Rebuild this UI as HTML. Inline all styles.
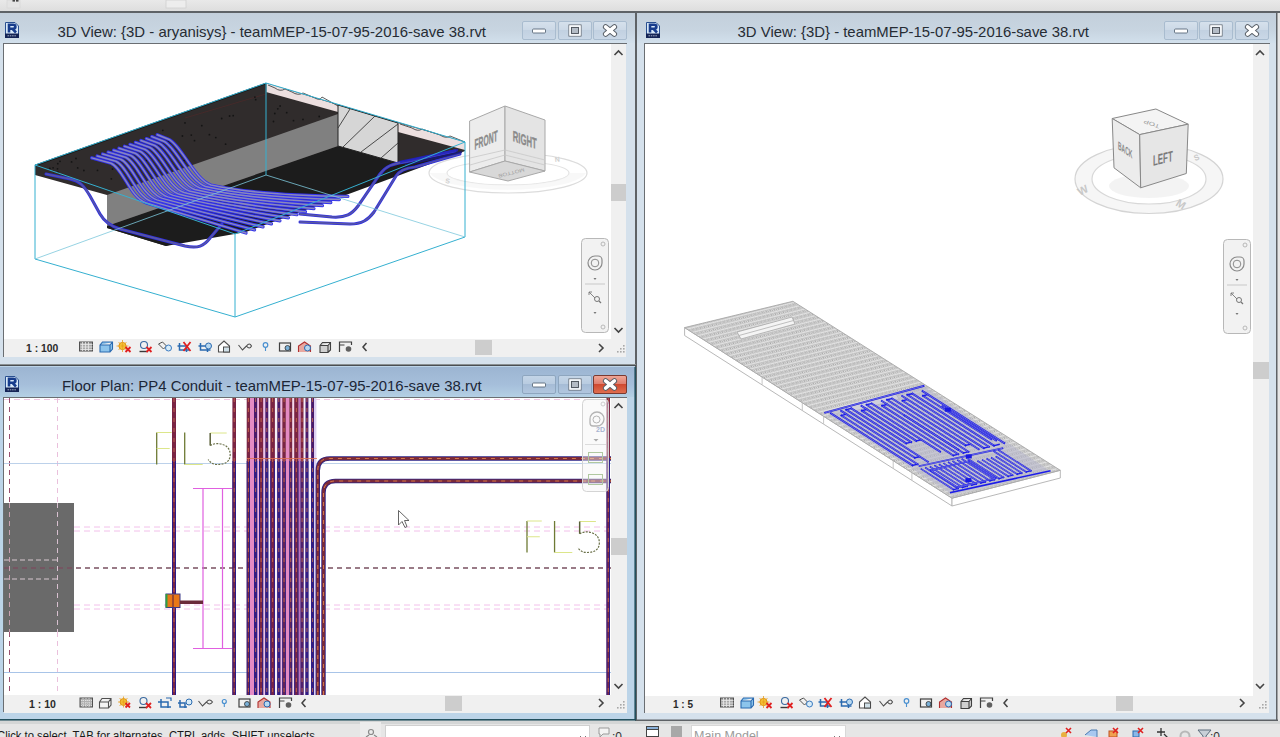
<!DOCTYPE html>
<html><head><meta charset="utf-8">
<style>
html,body{margin:0;padding:0;width:1280px;height:737px;overflow:hidden;background:#e6e6e6;}
svg{position:absolute;left:0;top:0;}
text{font-family:"Liberation Sans",sans-serif;}
</style></head>
<body>
<svg width="1280" height="737" viewBox="0 0 1280 737">
<defs>
  <linearGradient id="tb" x1="0" y1="0" x2="0" y2="1">
    <stop offset="0" stop-color="#c3cfdb"/><stop offset="0.6" stop-color="#c8d5e1"/><stop offset="1" stop-color="#d2e0ec"/>
  </linearGradient>
  <linearGradient id="tba" x1="0" y1="0" x2="0" y2="1">
    <stop offset="0" stop-color="#9cb5d2"/><stop offset="0.6" stop-color="#a6bfdb"/><stop offset="1" stop-color="#b4d0e4"/>
  </linearGradient>
  <linearGradient id="top" x1="0" y1="0" x2="0" y2="1">
    <stop offset="0" stop-color="#e9e9e9"/><stop offset="1" stop-color="#dedede"/>
  </linearGradient>
  <clipPath id="c1"><rect x="4" y="44" width="607" height="295"/></clipPath>
  <clipPath id="c2"><rect x="4" y="398" width="607" height="297"/></clipPath>
  <clipPath id="c3"><rect x="645" y="44" width="608" height="652"/></clipPath>
  <linearGradient id="btn" x1="0" y1="0" x2="0" y2="1"><stop offset="0" stop-color="#d6e1ec"/><stop offset="0.5" stop-color="#cbd8e6"/><stop offset="0.5" stop-color="#c2d1e1"/><stop offset="1" stop-color="#cad8e7"/></linearGradient>
  <linearGradient id="btna" x1="0" y1="0" x2="0" y2="1"><stop offset="0" stop-color="#c4d5e7"/><stop offset="0.5" stop-color="#b8cbe0"/><stop offset="0.5" stop-color="#a6bcd6"/><stop offset="1" stop-color="#b2c7df"/></linearGradient>
  <linearGradient id="closeg" x1="0" y1="0" x2="0" y2="1"><stop offset="0" stop-color="#f0a898"/><stop offset="0.45" stop-color="#e08070"/><stop offset="0.5" stop-color="#d04a30"/><stop offset="1" stop-color="#e07050"/></linearGradient>
  <pattern id="slabpat" patternUnits="userSpaceOnUse" width="4" height="4.5" patternTransform="rotate(-14)">
    <rect width="4" height="4.5" fill="#cdcdcd"/>
    <path d="M-0.5,3.6 L1.5,0.6 M1.5,3.6 L3.5,0.6 M3.5,3.6 L5.5,0.6" fill="none" stroke="#969696" stroke-width="0.75"/>
    <path d="M0.6,3.8 L2.6,0.8 M2.6,3.8 L4.6,0.8" fill="none" stroke="#ececec" stroke-width="0.7"/>
    <rect y="4" width="4" height="0.5" fill="#f2f2f2"/>
  </pattern>
  <pattern id="bluepat" patternUnits="userSpaceOnUse" width="12" height="5" patternTransform="rotate(32.5)">
    <rect width="12" height="5" fill="#c4c4d8"/>
    <rect y="0" width="12" height="1.6" fill="#1e1ee8"/>
    <rect y="2.8" width="12" height="0.8" fill="#6a6ad8"/>
    <rect x="10" y="0" width="1.3" height="5" fill="#3030e0"/>
  </pattern>
</defs>
<!-- top strip -->
<rect x="0" y="0" width="1280" height="11" fill="url(#top)"/>
<rect x="0" y="11" width="1280" height="2" fill="#5e6266"/><rect x="0" y="13" width="1280" height="1" fill="#dde5ec"/>
<rect x="166" y="0" width="20" height="8" fill="#ededed" stroke="#cfcfcf" stroke-width="0.8"/>
<rect x="7" y="0" width="13" height="8" fill="#e4e4e4" stroke="#d4d4d4" stroke-width="0.6"/><rect x="12.5" y="0" width="2.5" height="1.6" fill="#444"/><rect x="16" y="0" width="2.5" height="1.6" fill="#444"/>

<!-- WINDOW 1 upper-left -->
<rect x="0" y="13" width="635" height="351" fill="#d5e1ec"/>
<rect x="0" y="13" width="635" height="30" fill="url(#tb)"/>
<rect x="3" y="43" width="624" height="1" fill="#6a6e72"/>
<rect x="3" y="43" width="1" height="314" fill="#6a6e72"/>
<rect x="4" y="44" width="622" height="313" fill="#f0f0f0"/>
<rect x="4" y="44" width="607" height="295" fill="#ffffff"/>


<!-- VIEW 1 drawing -->
<g clip-path="url(#c1)">
  <!-- view cube ring -->
  <ellipse cx="508" cy="173" rx="79" ry="20" fill="none" stroke="#dcdcdc" stroke-width="1.2"/>
  <ellipse cx="508" cy="173" rx="61" ry="12" fill="none" stroke="#e2e2e2" stroke-width="1.2"/>
  <path d="M430,173 A79,20 0 0 0 586,173 L569,173 A61,12 0 0 1 447,173 Z" fill="#f4f4f4" opacity="0.6"/>
  <!-- cube -->
  <polygon points="469.6,121 505,106 505,161 469.6,172" fill="#ececec" stroke="#a8a8a8" stroke-width="1"/>
  <polygon points="505,106 545,120 545,171 505,161" fill="#e4e4e4" stroke="#a8a8a8" stroke-width="1"/>
  <polygon points="469.6,172 505,161 545,171 508,181" fill="#d8d8d8" stroke="#a8a8a8" stroke-width="1"/>
  <g stroke="#c8c8c8" stroke-width="0.8"><line x1="470" y1="158" x2="505" y2="150"/><line x1="505" y1="150" x2="545" y2="160"/><line x1="470" y1="165" x2="505" y2="155"/><line x1="505" y1="155" x2="545" y2="165"/></g>
  <text x="0" y="0" font-size="7" fill="#a0a0a0" transform="translate(524,168) rotate(-14) scale(0.9,0.7) rotate(180)">MOTTOB</text>
  <text x="0" y="0" font-size="7" font-weight="bold" fill="#d0d0d0" transform="translate(445,183) rotate(8)">S</text>
  <text x="0" y="0" font-size="7" font-weight="bold" fill="#d0d0d0" transform="translate(555,162) rotate(-6)">N</text>
  <text x="0" y="0" font-size="12" fill="#8a8a8a" font-weight="bold" stroke="#8a8a8a" stroke-width="0.3" transform="translate(474.5,150) skewY(-22) scale(0.56,1.25)">FRONT</text>
  <text x="0" y="0" font-size="12" fill="#8a8a8a" font-weight="bold" stroke="#8a8a8a" stroke-width="0.3" transform="translate(512.8,141) skewY(19) scale(0.64,1.25)">RIGHT</text>

  <!-- slab -->
  <polygon points="35,165 266,83 465,142 465,151 166,246 107,228 107,195 35,175" fill="#302c2c"/>
  <line x1="35" y1="165.5" x2="266" y2="83.5" stroke="#151515" stroke-width="1.5"/><line x1="185" y1="118" x2="266" y2="94" stroke="#4a2a2a" stroke-width="0.8"/>
  <!-- underside darker -->
  <polygon points="107,226 338,146 398,163 465,151 300,212 246,232 166,246 107,228" fill="#1c1c1c"/>
  <!-- gray beam face -->
  <polygon points="107,195 338,114 338,146 107,226" fill="#808080"/>
  <!-- pink cut strips -->
  <polygon points="266,83 338,105 338,112 266,92" fill="#ecdfdf"/>
  <polygon points="398,123 465,142 465,150 398,132" fill="#ecdfdf"/>
  <path d="M268,85 L275,88 Q280,92 285,89 L292,92 Q298,96 303,93 L315,98 Q320,101 322,97 L338,106" fill="none" stroke="#333" stroke-width="0.8"/>
  <path d="M400,124 L412,128 Q418,132 422,129 L440,135 Q446,139 450,136 L465,142" fill="none" stroke="#333" stroke-width="0.8"/>
  <!-- hatched section -->
  <polygon points="338,105 398,123 398,163 338,146" fill="#d6d6d6" stroke="#222" stroke-width="1"/>
  <g stroke="#3a3a3a" stroke-width="0.9">
    <line x1="338" y1="128" x2="350" y2="109"/>
    <line x1="343" y1="147" x2="375" y2="116"/>
    <line x1="361" y1="152" x2="398" y2="124"/>
    <line x1="381" y1="158" x2="398" y2="143"/>
  </g>
  <line x1="266" y1="83" x2="266" y2="92" stroke="#222"/>
  <!-- dots on slab top -->
<g fill="#141414">
<circle cx="114.6" cy="150.8" r="0.9"/>
<circle cx="185.0" cy="122.9" r="0.9"/>
<circle cx="160.2" cy="143.5" r="0.9"/>
<circle cx="57.5" cy="168.8" r="0.9"/>
<circle cx="53.1" cy="167.8" r="0.9"/>
<circle cx="60.0" cy="161.3" r="0.9"/>
<circle cx="136.3" cy="170.5" r="0.9"/>
<circle cx="71.6" cy="161.9" r="0.9"/>
<circle cx="179.9" cy="160.2" r="0.9"/>
<circle cx="169.1" cy="141.6" r="0.9"/>
<circle cx="254.9" cy="97.1" r="0.9"/>
<circle cx="229.6" cy="116.0" r="0.9"/>
<circle cx="76.0" cy="158.5" r="0.9"/>
<circle cx="111.3" cy="178.8" r="0.9"/>
<circle cx="83.9" cy="170.5" r="0.9"/>
<circle cx="182.4" cy="136.0" r="0.9"/>
<circle cx="162.8" cy="130.3" r="0.9"/>
<circle cx="57.8" cy="163.7" r="0.9"/>
<circle cx="191.3" cy="135.1" r="0.9"/>
<circle cx="112.5" cy="169.1" r="0.9"/>
<circle cx="142.4" cy="147.1" r="0.9"/>
<circle cx="215.8" cy="137.6" r="0.9"/>
<circle cx="97.5" cy="170.4" r="0.9"/>
<circle cx="157.9" cy="164.9" r="0.9"/>
<circle cx="201.8" cy="125.7" r="0.9"/>
<circle cx="255.7" cy="99.7" r="0.9"/>
<circle cx="134.9" cy="168.2" r="0.9"/>
<circle cx="77.7" cy="167.9" r="0.9"/>
<circle cx="53.4" cy="171.3" r="0.9"/>
<circle cx="209.4" cy="134.7" r="0.9"/>
<circle cx="233.2" cy="115.7" r="0.9"/>
<circle cx="194.5" cy="140.7" r="0.9"/>
<circle cx="169.7" cy="143.8" r="0.9"/>
<circle cx="225.6" cy="144.2" r="0.9"/>
<circle cx="146.9" cy="160.2" r="0.9"/>
<circle cx="58.0" cy="172.1" r="0.9"/>
<circle cx="184.1" cy="160.6" r="0.9"/>
<circle cx="221.7" cy="118.5" r="0.9"/>
<circle cx="127.9" cy="167.0" r="0.9"/>
<circle cx="49.9" cy="168.4" r="0.9"/>
<circle cx="280.1" cy="106.0" r="0.9"/>
<circle cx="273.5" cy="121.5" r="0.9"/>
<circle cx="277.8" cy="108.8" r="0.9"/>
<circle cx="293.5" cy="120.7" r="0.9"/>
<circle cx="274.8" cy="113.5" r="0.9"/>
<circle cx="303.0" cy="119.4" r="0.9"/>
<circle cx="319.2" cy="116.5" r="0.9"/>
<circle cx="286.7" cy="112.7" r="0.9"/>
</g>

  <!-- pipes -->
<path d="M300,214 L332,217 C346,218 352,214 358,206 L380,174 C386,166 392,164 405,162 L455,151" fill="none" stroke="#3030e0" stroke-width="3" stroke-linecap="round"/>
<path d="M300,214 L332,217 C346,218 352,214 358,206 L380,174 C386,166 392,164 405,162 L455,151" fill="none" stroke="#5a58a0" stroke-width="1.3" stroke-linecap="round"/>
<path d="M300,222 L350,224 C362,224 368,220 374,212 L396,176 C400,170 406,168 415,167 L460,154" fill="none" stroke="#3030e0" stroke-width="3" stroke-linecap="round"/>
<path d="M300,222 L350,224 C362,224 368,220 374,212 L396,176 C400,170 406,168 415,167 L460,154" fill="none" stroke="#5a58a0" stroke-width="1.3" stroke-linecap="round"/>
<path d="M46,174 L70,179 C80,181 84,186 90,196 L100,214 C104,221 110,226 120,229 L185,246 C198,249 204,246 210,238 L222,224" fill="none" stroke="#3030e0" stroke-width="3" stroke-linecap="round"/>
<path d="M46,174 L70,179 C80,181 84,186 90,196 L100,214 C104,221 110,226 120,229 L185,246 C198,249 204,246 210,238 L222,224" fill="none" stroke="#5a58a0" stroke-width="1.3" stroke-linecap="round"/>
<path d="M91.7,157.9 L111.0,163.2 C123.0,168.2 130.2,197.9 146.2,202.9 Q181.1,213.4 246.0,233.0" fill="none" stroke="#3232ee" stroke-width="3.3" stroke-linecap="round"/>
<path d="M97.2,156.0 L115.8,161.2 C127.8,166.2 135.6,196.4 151.6,201.4 Q187.6,212.0 254.5,229.9" fill="none" stroke="#3232ee" stroke-width="3.3" stroke-linecap="round"/>
<path d="M102.6,154.0 L120.6,159.2 C132.6,164.2 141.0,194.9 157.0,199.9 Q194.1,210.5 263.0,226.9" fill="none" stroke="#3232ee" stroke-width="3.3" stroke-linecap="round"/>
<path d="M108.1,152.1 L125.4,157.2 C137.4,162.2 146.4,193.4 162.4,198.4 Q200.6,209.1 271.4,223.8" fill="none" stroke="#3232ee" stroke-width="3.3" stroke-linecap="round"/>
<path d="M113.6,150.2 L130.2,155.2 C142.2,160.2 151.8,191.9 167.8,196.9 Q207.0,207.7 279.9,220.8" fill="none" stroke="#3232ee" stroke-width="3.3" stroke-linecap="round"/>
<path d="M119.0,148.2 L135.0,153.2 C147.0,158.2 157.2,190.4 173.2,195.4 Q213.5,206.2 288.4,217.8" fill="none" stroke="#3232ee" stroke-width="3.3" stroke-linecap="round"/>
<path d="M124.5,146.3 L139.8,151.2 C151.8,156.2 162.6,189.0 178.6,194.0 Q220.0,204.7 296.9,214.7" fill="none" stroke="#3232ee" stroke-width="3.3" stroke-linecap="round"/>
<path d="M130.0,144.4 L144.5,149.2 C156.5,154.2 168.0,187.5 184.0,192.5 Q226.5,203.2 305.4,211.7" fill="none" stroke="#3232ee" stroke-width="3.3" stroke-linecap="round"/>
<path d="M135.4,142.4 L149.3,147.2 C161.3,152.2 173.4,186.0 189.4,191.0 Q233.0,201.7 313.9,208.6" fill="none" stroke="#3232ee" stroke-width="3.3" stroke-linecap="round"/>
<path d="M140.9,140.5 L154.1,145.2 C166.1,150.2 178.8,184.5 194.8,189.5 Q239.4,200.2 322.4,205.6" fill="none" stroke="#3232ee" stroke-width="3.3" stroke-linecap="round"/>
<path d="M146.4,138.6 L158.9,143.2 C170.9,148.2 184.2,183.0 200.2,188.0 Q245.9,198.7 330.8,202.5" fill="none" stroke="#3232ee" stroke-width="3.3" stroke-linecap="round"/>
<path d="M151.8,136.6 L163.7,141.2 C175.7,146.2 189.6,181.5 205.6,186.5 Q252.4,197.1 339.3,199.5" fill="none" stroke="#3232ee" stroke-width="3.3" stroke-linecap="round"/>
<path d="M157.3,134.7 L168.5,139.2 C180.5,144.2 195.0,180.0 211.0,185.0 Q258.9,195.5 347.8,196.4" fill="none" stroke="#3232ee" stroke-width="3.3" stroke-linecap="round"/>
<path d="M91.7,157.9 L111.0,163.2 C123.0,168.2 130.2,197.9 146.2,202.9 Q181.1,213.4 246.0,233.0" fill="none" stroke="#8a88bc" stroke-width="1.5" stroke-linecap="round"/>
<path d="M97.2,156.0 L115.8,161.2 C127.8,166.2 135.6,196.4 151.6,201.4 Q187.6,212.0 254.5,229.9" fill="none" stroke="#8a88bc" stroke-width="1.5" stroke-linecap="round"/>
<path d="M102.6,154.0 L120.6,159.2 C132.6,164.2 141.0,194.9 157.0,199.9 Q194.1,210.5 263.0,226.9" fill="none" stroke="#8a88bc" stroke-width="1.5" stroke-linecap="round"/>
<path d="M108.1,152.1 L125.4,157.2 C137.4,162.2 146.4,193.4 162.4,198.4 Q200.6,209.1 271.4,223.8" fill="none" stroke="#8a88bc" stroke-width="1.5" stroke-linecap="round"/>
<path d="M113.6,150.2 L130.2,155.2 C142.2,160.2 151.8,191.9 167.8,196.9 Q207.0,207.7 279.9,220.8" fill="none" stroke="#8a88bc" stroke-width="1.5" stroke-linecap="round"/>
<path d="M119.0,148.2 L135.0,153.2 C147.0,158.2 157.2,190.4 173.2,195.4 Q213.5,206.2 288.4,217.8" fill="none" stroke="#8a88bc" stroke-width="1.5" stroke-linecap="round"/>
<path d="M124.5,146.3 L139.8,151.2 C151.8,156.2 162.6,189.0 178.6,194.0 Q220.0,204.7 296.9,214.7" fill="none" stroke="#8a88bc" stroke-width="1.5" stroke-linecap="round"/>
<path d="M130.0,144.4 L144.5,149.2 C156.5,154.2 168.0,187.5 184.0,192.5 Q226.5,203.2 305.4,211.7" fill="none" stroke="#8a88bc" stroke-width="1.5" stroke-linecap="round"/>
<path d="M135.4,142.4 L149.3,147.2 C161.3,152.2 173.4,186.0 189.4,191.0 Q233.0,201.7 313.9,208.6" fill="none" stroke="#8a88bc" stroke-width="1.5" stroke-linecap="round"/>
<path d="M140.9,140.5 L154.1,145.2 C166.1,150.2 178.8,184.5 194.8,189.5 Q239.4,200.2 322.4,205.6" fill="none" stroke="#8a88bc" stroke-width="1.5" stroke-linecap="round"/>
<path d="M146.4,138.6 L158.9,143.2 C170.9,148.2 184.2,183.0 200.2,188.0 Q245.9,198.7 330.8,202.5" fill="none" stroke="#8a88bc" stroke-width="1.5" stroke-linecap="round"/>
<path d="M151.8,136.6 L163.7,141.2 C175.7,146.2 189.6,181.5 205.6,186.5 Q252.4,197.1 339.3,199.5" fill="none" stroke="#8a88bc" stroke-width="1.5" stroke-linecap="round"/>
<path d="M157.3,134.7 L168.5,139.2 C180.5,144.2 195.0,180.0 211.0,185.0 Q258.9,195.5 347.8,196.4" fill="none" stroke="#8a88bc" stroke-width="1.5" stroke-linecap="round"/>
<path d="M400,162 L458,150" fill="none" stroke="#2020c0" stroke-width="2.5" opacity="0.85"/>
<path d="M405,165 L462,152" fill="none" stroke="#1a1a80" stroke-width="2" opacity="0.8"/>
  <!-- bounding box cyan -->
  <g stroke="#35b0d0" stroke-width="1" fill="none">
    <polyline points="35,259 35,165 266,83 465,142 465,237"/>
    <polyline points="35,165 235,234 465,142"/>
    <polyline points="35,259 235,317 465,237"/>
    <line x1="235" y1="234" x2="235" y2="317"/>
    <line x1="266" y1="83" x2="266" y2="175"/>
    <polyline points="35,259 266,175 465,237" stroke="#7cc8dc" stroke-width="0.8"/>
  </g>
</g>

<!-- vertical dark divider -->
<rect x="635" y="11" width="2" height="710" fill="#5e6266"/>
<rect x="0" y="364" width="636" height="1" fill="#8a9092"/><rect x="0" y="365" width="636" height="1.6" fill="#4a4e52"/><rect x="0" y="366.6" width="635" height="1" fill="#dfe8f0"/>

<!-- WINDOW 2 bottom-left (active) -->
<rect x="0" y="366" width="635" height="354" fill="#bcd4e8"/>
<rect x="0" y="367" width="635" height="30" fill="url(#tba)"/>
<rect x="3" y="397" width="624" height="1" fill="#6a6e72"/>
<rect x="3" y="397" width="1" height="315" fill="#6a6e72"/>
<rect x="4" y="398" width="622" height="314" fill="#f0f0f0"/>
<rect x="4" y="398" width="607" height="297" fill="#ffffff"/>

<!-- VIEW 2 floor plan -->
<g clip-path="url(#c2)">
<line x1="4" y1="399.5" x2="611" y2="399.5" stroke="#f0c8e4" stroke-width="1" stroke-dasharray="6,4"/>
<line x1="9.5" y1="398" x2="9.5" y2="695" stroke="#9a5070" stroke-width="1" stroke-dasharray="5,4"/>
<line x1="57.5" y1="398" x2="57.5" y2="695" stroke="#eac0dc" stroke-width="1" stroke-dasharray="5,4"/>
<line x1="4" y1="463.5" x2="611" y2="463.5" stroke="#b4cce8" stroke-width="0.9"/>
<line x1="4" y1="672.5" x2="611" y2="672.5" stroke="#a8c4e8" stroke-width="1"/>
<rect x="4" y="503" width="70" height="129" fill="#6a6a6a"/>
<line x1="9.5" y1="503" x2="9.5" y2="632" stroke="#c8a0b0" stroke-width="1" stroke-dasharray="5,4"/>
<line x1="57.5" y1="503" x2="57.5" y2="632" stroke="#d8c0d0" stroke-width="1" stroke-dasharray="5,4"/>
<line x1="4" y1="560" x2="57" y2="560" stroke="#d8c8d0" stroke-width="1" stroke-dasharray="5,3"/>
<line x1="4" y1="579" x2="57" y2="579" stroke="#d8c8d0" stroke-width="1" stroke-dasharray="5,3"/>
<line x1="74" y1="527" x2="611" y2="527" stroke="#f2c0ea" stroke-width="1" stroke-dasharray="6,4"/>
<line x1="74" y1="531" x2="611" y2="531" stroke="#f2c0ea" stroke-width="1" stroke-dasharray="6,4"/>
<line x1="74" y1="605" x2="611" y2="605" stroke="#f2c0ea" stroke-width="1" stroke-dasharray="6,4"/>
<line x1="74" y1="609" x2="611" y2="609" stroke="#f2c0ea" stroke-width="1" stroke-dasharray="6,4"/>
<line x1="4" y1="568" x2="611" y2="568" stroke="#7a5060" stroke-width="1.3" stroke-dasharray="5,4"/>
<g stroke="#e060e0" stroke-width="1.2" fill="none"><line x1="193" y1="488.5" x2="232" y2="488.5"/><line x1="193" y1="648.5" x2="232" y2="648.5"/><line x1="203" y1="488" x2="203" y2="649"/><line x1="222.5" y1="488" x2="222.5" y2="649"/></g>
<rect x="172" y="398" width="4" height="297" fill="#7a2444"/>
<rect x="172" y="461" width="1.0" height="234" fill="#2c1e8a"/>
<rect x="175.0" y="461" width="1.0" height="234" fill="#2c1e8a"/>
<line x1="174.0" y1="398" x2="174.0" y2="695" stroke="#d8784a" stroke-width="1" stroke-dasharray="4,6" opacity="0.75"/>
<rect x="232.4" y="398" width="3.5999999999999943" height="297" fill="#7a2444"/>
<rect x="232.4" y="461" width="1.0" height="234" fill="#2c1e8a"/>
<rect x="235.0" y="461" width="1.0" height="234" fill="#2c1e8a"/>
<line x1="234.2" y1="398" x2="234.2" y2="695" stroke="#d8784a" stroke-width="1" stroke-dasharray="4,6" opacity="0.75"/>
<rect x="247" y="398" width="67" height="297" fill="#f6eef6"/>
<rect x="250" y="398" width="4" height="297" fill="#e48ac4"/>
<rect x="285.8" y="398" width="3.5" height="297" fill="#e48ac4"/>
<rect x="257.2" y="398" width="1.8000000000000114" height="297" fill="#f0b0dc"/>
<rect x="298.5" y="398" width="2.1000000000000227" height="297" fill="#c070c0"/>
<rect x="263.2" y="398" width="2.1000000000000227" height="297" fill="#e8c0e8"/>
<rect x="280.3" y="398" width="2.0" height="297" fill="#f0b8e0"/>
<rect x="292.2" y="398" width="2.0" height="297" fill="#f4d8ec"/>
<rect x="308.4" y="398" width="2.7000000000000455" height="297" fill="#f4eef8"/>
<rect x="314" y="398" width="2.3999999999999773" height="297" fill="#dcd0f0"/>
<rect x="246.7" y="398" width="3.3000000000000114" height="297" fill="#7a2444"/>
<rect x="246.7" y="461" width="1.0" height="234" fill="#2c1e8a"/>
<rect x="249.0" y="461" width="1.0" height="234" fill="#2c1e8a"/>
<line x1="248.35" y1="398" x2="248.35" y2="695" stroke="#d8784a" stroke-width="1" stroke-dasharray="4,6" opacity="0.75"/>
<rect x="254" y="398" width="3.1999999999999886" height="297" fill="#4a1a6a"/>
<rect x="254" y="461" width="1.3" height="234" fill="#2c1e8a"/>
<rect x="255.89999999999998" y="461" width="1.3" height="234" fill="#2c1e8a"/>
<line x1="255.6" y1="398" x2="255.6" y2="695" stroke="#d8784a" stroke-width="1" stroke-dasharray="4,6" opacity="0.75"/>
<rect x="259" y="398" width="4.199999999999989" height="297" fill="#7a2444"/>
<rect x="259" y="461" width="1.0" height="234" fill="#2c1e8a"/>
<rect x="262.2" y="461" width="1.0" height="234" fill="#2c1e8a"/>
<line x1="261.1" y1="398" x2="261.1" y2="695" stroke="#d8784a" stroke-width="1" stroke-dasharray="4,6" opacity="0.75"/>
<rect x="265.3" y="398" width="3.0" height="297" fill="#4a1a6a"/>
<rect x="265.3" y="461" width="1.3" height="234" fill="#2c1e8a"/>
<rect x="267.0" y="461" width="1.3" height="234" fill="#2c1e8a"/>
<line x1="266.8" y1="398" x2="266.8" y2="695" stroke="#d8784a" stroke-width="1" stroke-dasharray="4,6" opacity="0.75"/>
<rect x="270.3" y="398" width="4.599999999999966" height="297" fill="#7a2444"/>
<rect x="270.3" y="461" width="1.0" height="234" fill="#2c1e8a"/>
<rect x="273.9" y="461" width="1.0" height="234" fill="#2c1e8a"/>
<line x1="272.6" y1="398" x2="272.6" y2="695" stroke="#d8784a" stroke-width="1" stroke-dasharray="4,6" opacity="0.75"/>
<rect x="277.3" y="398" width="3.0" height="297" fill="#4a1a6a"/>
<rect x="277.3" y="461" width="1.3" height="234" fill="#2c1e8a"/>
<rect x="279.0" y="461" width="1.3" height="234" fill="#2c1e8a"/>
<line x1="278.8" y1="398" x2="278.8" y2="695" stroke="#d8784a" stroke-width="1" stroke-dasharray="4,6" opacity="0.75"/>
<rect x="282.3" y="398" width="3.5" height="297" fill="#7a2444"/>
<rect x="282.3" y="461" width="1.0" height="234" fill="#2c1e8a"/>
<rect x="284.8" y="461" width="1.0" height="234" fill="#2c1e8a"/>
<line x1="284.05" y1="398" x2="284.05" y2="695" stroke="#d8784a" stroke-width="1" stroke-dasharray="4,6" opacity="0.75"/>
<rect x="289.3" y="398" width="2.8999999999999773" height="297" fill="#7a2444"/>
<rect x="289.3" y="461" width="1.0" height="234" fill="#2c1e8a"/>
<rect x="291.2" y="461" width="1.0" height="234" fill="#2c1e8a"/>
<line x1="290.75" y1="398" x2="290.75" y2="695" stroke="#d8784a" stroke-width="1" stroke-dasharray="4,6" opacity="0.75"/>
<rect x="294.2" y="398" width="4.300000000000011" height="297" fill="#7a2444"/>
<rect x="294.2" y="461" width="1.0" height="234" fill="#2c1e8a"/>
<rect x="297.5" y="461" width="1.0" height="234" fill="#2c1e8a"/>
<line x1="296.35" y1="398" x2="296.35" y2="695" stroke="#d8784a" stroke-width="1" stroke-dasharray="4,6" opacity="0.75"/>
<rect x="300.6" y="398" width="2.8999999999999773" height="297" fill="#7a2444"/>
<rect x="300.6" y="461" width="1.0" height="234" fill="#2c1e8a"/>
<rect x="302.5" y="461" width="1.0" height="234" fill="#2c1e8a"/>
<line x1="302.05" y1="398" x2="302.05" y2="695" stroke="#d8784a" stroke-width="1" stroke-dasharray="4,6" opacity="0.75"/>
<rect x="305.5" y="398" width="2.8999999999999773" height="297" fill="#4a1a6a"/>
<rect x="305.5" y="461" width="1.3" height="234" fill="#2c1e8a"/>
<rect x="307.09999999999997" y="461" width="1.3" height="234" fill="#2c1e8a"/>
<line x1="306.95" y1="398" x2="306.95" y2="695" stroke="#d8784a" stroke-width="1" stroke-dasharray="4,6" opacity="0.75"/>
<rect x="311.1" y="398" width="2.8999999999999773" height="297" fill="#4a1a6a"/>
<rect x="311.1" y="461" width="1.3" height="234" fill="#2c1e8a"/>
<rect x="312.7" y="461" width="1.3" height="234" fill="#2c1e8a"/>
<line x1="312.55" y1="398" x2="312.55" y2="695" stroke="#d8784a" stroke-width="1" stroke-dasharray="4,6" opacity="0.75"/>
<line x1="247" y1="458.5" x2="317" y2="458.5" stroke="#e07050" stroke-width="0.8"/>
<path d="M317.8,695 L317.8,470.5 Q317.8,458.5 329.8,458.5 L611,458.5" fill="none" stroke="#2c2488" stroke-width="4.4"/><path d="M317.8,695 L317.8,470.5 Q317.8,458.5 329.8,458.5 L611,458.5" fill="none" stroke="#7a2a3a" stroke-width="2.8"/><path d="M317.8,695 L317.8,470.5 Q317.8,458.5 329.8,458.5 L611,458.5" fill="none" stroke="#e0804a" stroke-width="0.9" stroke-dasharray="4,5"/>
<path d="M323.5,695 L323.5,493 Q323.5,481 335.5,481 L611,481" fill="none" stroke="#2c2488" stroke-width="4.4"/><path d="M323.5,695 L323.5,493 Q323.5,481 335.5,481 L611,481" fill="none" stroke="#7a2a3a" stroke-width="2.8"/><path d="M323.5,695 L323.5,493 Q323.5,481 335.5,481 L611,481" fill="none" stroke="#e0804a" stroke-width="0.9" stroke-dasharray="4,5"/>
<rect x="606.5" y="398" width="3.5" height="297" fill="#7a2444"/>
<rect x="606.5" y="458" width="1.0" height="237" fill="#2c1e8a"/>
<rect x="609.0" y="458" width="1.0" height="237" fill="#2c1e8a"/>
<line x1="608.25" y1="398" x2="608.25" y2="695" stroke="#d8784a" stroke-width="1" stroke-dasharray="4,6" opacity="0.75"/>
<path d="M156.7,432.5 V464.5" stroke="#6e7a34" stroke-width="1.3" fill="none"/><path d="M156.7,432.5 H171.7 M156.7,448.5 H169.7" stroke="#dce68a" stroke-width="1" fill="none"/><path d="M184.7,432.5 V464.5" stroke="#6e7a34" stroke-width="1.3" fill="none"/><path d="M184.7,464.5 H202.7" stroke="#dce68a" stroke-width="1" fill="none"/><path d="M210.2,433.0 H226.7" stroke="#dce68a" stroke-width="1" fill="none"/><path d="M210.2,433.0 V445.5" stroke="#5a6038" stroke-width="1.5" fill="none"/><path d="M210.2,445.5 C216.2,441.5 230.2,443.5 230.2,454.5 C230.2,463.5 222.2,464.5 217.2,464.5 C213.2,464.5 210.2,462.5 208.2,459.5" stroke="#6a7048" stroke-width="1.2" stroke-dasharray="2,1.2" fill="none"/>
<path d="M527,521 V552.5" stroke="#6e7a34" stroke-width="1.3" fill="none"/><path d="M527,521 H541.765625 M527,536.75 H539.796875" stroke="#dce68a" stroke-width="1" fill="none"/><path d="M554.5625,521 V552.5" stroke="#6e7a34" stroke-width="1.3" fill="none"/><path d="M554.5625,552.5 H572.28125" stroke="#dce68a" stroke-width="1" fill="none"/><path d="M579.6640625,521.5 H595.90625" stroke="#dce68a" stroke-width="1" fill="none"/><path d="M579.6640625,521.5 V533.796875" stroke="#5a6038" stroke-width="1.5" fill="none"/><path d="M579.6640625,533.796875 C585.5703125,529.859375 599.3515625,531.828125 599.3515625,542.65625 C599.3515625,551.515625 591.4765625,552.5 586.5546875,552.5 C582.6171875,552.5 579.6640625,550.53125 577.6953125,547.578125" stroke="#6a7048" stroke-width="1.2" stroke-dasharray="2,1.2" fill="none"/>
<rect x="166" y="594" width="14" height="13.5" fill="#e87818" stroke="#3a3a8a" stroke-width="1"/>
<rect x="165.5" y="594" width="2" height="13.5" fill="#30a040"/>
<line x1="173" y1="595" x2="173" y2="607" stroke="#6e2c3c" stroke-width="1.2"/>
<rect x="180" y="600.5" width="23" height="3.5" fill="#6a2a3a"/>
<rect x="582.5" y="399.5" width="26" height="92" rx="4" fill="#f4f4f4" fill-opacity="0.45" stroke="#d4d4d4" stroke-width="1"/>
<circle cx="603" cy="404" r="2" fill="none" stroke="#c8c8c8" stroke-width="0.9"/>
<path d="M590,419 a7,7 0 1 1 7,7 h-4 a3,3 0 0 1 -3,-3 z" fill="none" stroke="#b4b4b4" stroke-width="1.3"/><circle cx="596.5" cy="419.5" r="3.5" fill="none" stroke="#b4b4b4" stroke-width="1"/>
<text x="596" y="432" font-size="7" font-weight="bold" fill="#a8b4d0">2D</text>
<path d="M593.5,439 L598.5,439 L596,441.5 Z" fill="#aaa"/>
<line x1="585" y1="444.5" x2="606" y2="444.5" stroke="#dcdcdc" stroke-width="1"/>
<rect x="588.5" y="452.5" width="14" height="10" fill="none" stroke="#b0c8a0" stroke-width="1"/><rect x="588.5" y="474.5" width="14" height="10" fill="none" stroke="#b0c8a0" stroke-width="1"/>
<path d="M398.5,510.5 L398.5,525 L402,521.5 L405,527.5 L407,526.5 L404.5,520.5 L409,520.5 Z" fill="#fff" stroke="#555" stroke-width="0.9"/>
</g>
<!-- WINDOW 3 right -->
<rect x="637" y="13" width="640" height="707" fill="#d5e1ec"/>
<rect x="637" y="13" width="640" height="30" fill="url(#tb)"/>
<rect x="644" y="43" width="626" height="1" fill="#6a6e72"/>
<rect x="644" y="43" width="1" height="670" fill="#6a6e72"/>
<rect x="645" y="44" width="624" height="669" fill="#f0f0f0"/>
<rect x="645" y="44" width="608" height="652" fill="#ffffff"/>
<rect x="1277" y="13" width="3" height="708" fill="#e6e6e6"/>
<rect x="1276" y="13" width="1.5" height="708" fill="#5e6266"/>
<rect x="637" y="719.5" width="641" height="1.5" fill="#5e6266"/>

<!-- VIEW 3 right -->
<g clip-path="url(#c3)">
<ellipse cx="1149" cy="179" rx="74" ry="34.5" fill="#f6f6f6" stroke="#d4d4d4" stroke-width="1.2"/>
<ellipse cx="1149" cy="179" rx="57" ry="25" fill="#ffffff" stroke="#d8d8d8" stroke-width="1.2"/>
<ellipse cx="1149" cy="186" rx="40" ry="12" fill="#f0f0f0" opacity="0.8"/>
<text x="0" y="0" font-size="11" font-weight="bold" fill="#c8c8c8" transform="translate(1080,196) rotate(-28)">W</text>
<text x="0" y="0" font-size="11" font-weight="bold" fill="#c8c8c8" transform="translate(1175,205) rotate(32)">M</text>
<text x="0" y="0" font-size="8" font-weight="bold" fill="#c8c8c8" transform="translate(1195,161) rotate(-20)">S</text>
<polygon points="1112.2,118.5 1155.9,109 1188.2,124.2 1139.7,134.6" fill="#f4f4f4" stroke="#888" stroke-width="1"/>
<polygon points="1112.2,118.5 1139.7,134.6 1140.7,187.8 1114,167.8" fill="#ececec" stroke="#888" stroke-width="1"/>
<polygon points="1139.7,134.6 1188.2,124.2 1186.3,173.5 1140.7,187.8" fill="#e6e6e6" stroke="#888" stroke-width="1"/>
<text x="0" y="0" font-size="12" fill="#7a7a7a" font-weight="bold" transform="translate(1153,166) skewY(-14) scale(0.66,1.25)">LEFT</text>
<text x="0" y="0" font-size="10" fill="#8a8a8a" font-weight="bold" transform="translate(1118,149) skewY(34) scale(0.5,1.15)">BACK</text>
<text x="0" y="0" font-size="9" fill="#9a9a9a" transform="translate(1160,125) rotate(200) scale(0.9,0.6)">TOP</text>
<polygon points="684.6,327.6 952,498.2 952,506 684.6,335.5" fill="#ffffff" stroke="#b0b0b0" stroke-width="0.9"/>
<polygon points="952,498.2 1060.3,470.3 1060.3,478 952,506" fill="#ffffff" stroke="#b0b0b0" stroke-width="0.9"/>
<polygon points="684.6,327.6 792.9,301.3 1060.3,470.3 952,498.2" fill="url(#slabpat)" stroke="#a8a8a8" stroke-width="0.9"/>
<line x1="762.1" y1="377.1" x2="762.1" y2="384.6" stroke="#b8b8b8" stroke-width="0.8"/>
<line x1="802.3" y1="402.7" x2="802.3" y2="410.2" stroke="#b8b8b8" stroke-width="0.8"/>
<line x1="823.6" y1="416.3" x2="823.6" y2="423.8" stroke="#b8b8b8" stroke-width="0.8"/>
<line x1="893.2" y1="460.7" x2="893.2" y2="468.2" stroke="#b8b8b8" stroke-width="0.8"/>
<line x1="911.9" y1="472.6" x2="911.9" y2="480.1" stroke="#b8b8b8" stroke-width="0.8"/>
<polygon points="737,332 792,317 795,324 741,339" fill="#f4f4f4" stroke="#a8a8a8" stroke-width="0.8"/><line x1="739" y1="335.5" x2="793.5" y2="320.5" stroke="#b0b0b0" stroke-width="0.8"/>
<polygon points="844,408 896,394 899,399 847,413" fill="#f4f4f4" stroke="#b0b0b0" stroke-width="0.8"/>
<!-- BLUE -->
<polygon points="825.3,412.6 923.4,386.0 1051.1,471.8 952.9,494.9" fill="#b8b8cc" opacity="0.6"/>
<line x1="825.3" y1="412.6" x2="923.4" y2="386.0" stroke="#1c1ce8" stroke-width="1.98" stroke-linecap="square"/><line x1="825.3" y1="412.6" x2="923.4" y2="386.0" stroke="#9a9ad8" stroke-width="0.6"/>
<line x1="919.5" y1="466.0" x2="1002.4" y2="448.3" stroke="#1c1ce8" stroke-width="1.76" stroke-linecap="square"/><line x1="919.5" y1="466.0" x2="1002.4" y2="448.3" stroke="#9a9ad8" stroke-width="0.6"/>
<line x1="950.7" y1="492.6" x2="1049.8" y2="470.9" stroke="#1c1ce8" stroke-width="1.54" stroke-linecap="square"/>
<line x1="831.0" y1="413.4" x2="912.5" y2="465.4" stroke="#1c1ce8" stroke-width="1.87" stroke-linecap="square"/><line x1="831.0" y1="413.4" x2="912.5" y2="465.4" stroke="#9a9ad8" stroke-width="0.6"/>
<line x1="912.5" y1="465.4" x2="917.6" y2="464.2" stroke="#1c1ce8" stroke-width="1.43" stroke-linecap="square"/>
<line x1="841.4" y1="415.5" x2="917.6" y2="464.2" stroke="#1c1ce8" stroke-width="1.87" stroke-linecap="square"/><line x1="841.4" y1="415.5" x2="917.6" y2="464.2" stroke="#9a9ad8" stroke-width="0.6"/>
<line x1="841.4" y1="415.5" x2="846.5" y2="414.3" stroke="#1c1ce8" stroke-width="1.43" stroke-linecap="square"/>
<line x1="841.2" y1="410.9" x2="914.7" y2="457.8" stroke="#1c1ce8" stroke-width="1.87" stroke-linecap="square"/><line x1="841.2" y1="410.9" x2="914.7" y2="457.8" stroke="#9a9ad8" stroke-width="0.6"/>
<line x1="914.7" y1="457.8" x2="919.8" y2="456.6" stroke="#1c1ce8" stroke-width="1.43" stroke-linecap="square"/>
<line x1="846.2" y1="409.6" x2="927.8" y2="461.7" stroke="#1c1ce8" stroke-width="1.87" stroke-linecap="square"/><line x1="846.2" y1="409.6" x2="927.8" y2="461.7" stroke="#9a9ad8" stroke-width="0.6"/>
<line x1="846.2" y1="409.6" x2="851.3" y2="408.4" stroke="#1c1ce8" stroke-width="1.43" stroke-linecap="square"/>
<line x1="851.3" y1="408.4" x2="906.2" y2="443.4" stroke="#1c1ce8" stroke-width="1.87" stroke-linecap="square"/><line x1="851.3" y1="408.4" x2="906.2" y2="443.4" stroke="#9a9ad8" stroke-width="0.6"/>
<line x1="906.2" y1="443.4" x2="911.2" y2="442.1" stroke="#1c1ce8" stroke-width="1.43" stroke-linecap="square"/>
<line x1="861.8" y1="410.6" x2="911.2" y2="442.1" stroke="#1c1ce8" stroke-width="1.87" stroke-linecap="square"/><line x1="861.8" y1="410.6" x2="911.2" y2="442.1" stroke="#9a9ad8" stroke-width="0.6"/>
<line x1="861.8" y1="410.6" x2="866.9" y2="409.4" stroke="#1c1ce8" stroke-width="1.43" stroke-linecap="square"/>
<line x1="861.5" y1="405.9" x2="916.3" y2="440.9" stroke="#1c1ce8" stroke-width="1.87" stroke-linecap="square"/><line x1="861.5" y1="405.9" x2="916.3" y2="440.9" stroke="#9a9ad8" stroke-width="0.6"/>
<line x1="916.3" y1="440.9" x2="921.4" y2="439.7" stroke="#1c1ce8" stroke-width="1.43" stroke-linecap="square"/>
<line x1="866.6" y1="404.7" x2="940.1" y2="451.6" stroke="#1c1ce8" stroke-width="1.87" stroke-linecap="square"/><line x1="866.6" y1="404.7" x2="940.1" y2="451.6" stroke="#9a9ad8" stroke-width="0.6"/>
<line x1="866.6" y1="404.7" x2="871.7" y2="403.5" stroke="#1c1ce8" stroke-width="1.43" stroke-linecap="square"/>
<line x1="871.7" y1="403.5" x2="953.3" y2="455.5" stroke="#1c1ce8" stroke-width="1.87" stroke-linecap="square"/><line x1="871.7" y1="403.5" x2="953.3" y2="455.5" stroke="#9a9ad8" stroke-width="0.6"/>
<line x1="953.3" y1="455.5" x2="958.3" y2="454.3" stroke="#1c1ce8" stroke-width="1.43" stroke-linecap="square"/>
<line x1="882.1" y1="405.6" x2="958.3" y2="454.3" stroke="#1c1ce8" stroke-width="1.87" stroke-linecap="square"/><line x1="882.1" y1="405.6" x2="958.3" y2="454.3" stroke="#9a9ad8" stroke-width="0.6"/>
<line x1="882.1" y1="405.6" x2="887.2" y2="404.4" stroke="#1c1ce8" stroke-width="1.43" stroke-linecap="square"/>
<line x1="881.9" y1="401.0" x2="963.4" y2="453.0" stroke="#1c1ce8" stroke-width="1.87" stroke-linecap="square"/><line x1="881.9" y1="401.0" x2="963.4" y2="453.0" stroke="#9a9ad8" stroke-width="0.6"/>
<line x1="963.4" y1="453.0" x2="968.5" y2="451.8" stroke="#1c1ce8" stroke-width="1.43" stroke-linecap="square"/>
<line x1="887.0" y1="399.8" x2="968.5" y2="451.8" stroke="#1c1ce8" stroke-width="1.87" stroke-linecap="square"/><line x1="887.0" y1="399.8" x2="968.5" y2="451.8" stroke="#9a9ad8" stroke-width="0.6"/>
<line x1="887.0" y1="399.8" x2="892.1" y2="398.5" stroke="#1c1ce8" stroke-width="1.43" stroke-linecap="square"/>
<line x1="892.1" y1="398.5" x2="965.6" y2="445.4" stroke="#1c1ce8" stroke-width="1.87" stroke-linecap="square"/><line x1="892.1" y1="398.5" x2="965.6" y2="445.4" stroke="#9a9ad8" stroke-width="0.6"/>
<line x1="965.6" y1="445.4" x2="970.7" y2="444.2" stroke="#1c1ce8" stroke-width="1.43" stroke-linecap="square"/>
<line x1="902.5" y1="400.7" x2="978.7" y2="449.3" stroke="#1c1ce8" stroke-width="1.87" stroke-linecap="square"/><line x1="902.5" y1="400.7" x2="978.7" y2="449.3" stroke="#9a9ad8" stroke-width="0.6"/>
<line x1="902.5" y1="400.7" x2="907.6" y2="399.5" stroke="#1c1ce8" stroke-width="1.43" stroke-linecap="square"/>
<line x1="902.2" y1="396.0" x2="983.8" y2="448.1" stroke="#1c1ce8" stroke-width="1.87" stroke-linecap="square"/><line x1="902.2" y1="396.0" x2="983.8" y2="448.1" stroke="#9a9ad8" stroke-width="0.6"/>
<line x1="983.8" y1="448.1" x2="988.9" y2="446.8" stroke="#1c1ce8" stroke-width="1.43" stroke-linecap="square"/>
<line x1="907.3" y1="394.8" x2="988.9" y2="446.8" stroke="#1c1ce8" stroke-width="1.87" stroke-linecap="square"/><line x1="907.3" y1="394.8" x2="988.9" y2="446.8" stroke="#9a9ad8" stroke-width="0.6"/>
<line x1="907.3" y1="394.8" x2="912.4" y2="393.6" stroke="#1c1ce8" stroke-width="1.43" stroke-linecap="square"/>
<line x1="912.4" y1="393.6" x2="994.0" y2="445.6" stroke="#1c1ce8" stroke-width="1.87" stroke-linecap="square"/><line x1="912.4" y1="393.6" x2="994.0" y2="445.6" stroke="#9a9ad8" stroke-width="0.6"/>
<line x1="994.0" y1="445.6" x2="999.1" y2="444.4" stroke="#1c1ce8" stroke-width="1.43" stroke-linecap="square"/>
<line x1="922.9" y1="395.8" x2="991.0" y2="439.3" stroke="#1c1ce8" stroke-width="1.87" stroke-linecap="square"/><line x1="922.9" y1="395.8" x2="991.0" y2="439.3" stroke="#9a9ad8" stroke-width="0.6"/>
<line x1="922.9" y1="395.8" x2="927.9" y2="394.5" stroke="#1c1ce8" stroke-width="1.43" stroke-linecap="square"/>
<line x1="922.6" y1="391.1" x2="1004.2" y2="443.1" stroke="#1c1ce8" stroke-width="1.87" stroke-linecap="square"/><line x1="922.6" y1="391.1" x2="1004.2" y2="443.1" stroke="#9a9ad8" stroke-width="0.6"/>
<line x1="921.4" y1="469.1" x2="953.5" y2="489.6" stroke="#1c1ce8" stroke-width="1.65" stroke-linecap="square"/><line x1="921.4" y1="469.1" x2="953.5" y2="489.6" stroke="#9a9ad8" stroke-width="0.6"/>
<line x1="953.5" y1="489.6" x2="958.0" y2="488.5" stroke="#1c1ce8" stroke-width="1.32" stroke-linecap="square"/>
<line x1="925.9" y1="468.0" x2="958.0" y2="488.5" stroke="#1c1ce8" stroke-width="1.65" stroke-linecap="square"/><line x1="925.9" y1="468.0" x2="958.0" y2="488.5" stroke="#9a9ad8" stroke-width="0.6"/>
<line x1="930.5" y1="466.9" x2="962.6" y2="487.4" stroke="#1c1ce8" stroke-width="1.65" stroke-linecap="square"/><line x1="930.5" y1="466.9" x2="962.6" y2="487.4" stroke="#9a9ad8" stroke-width="0.6"/>
<line x1="962.6" y1="487.4" x2="967.1" y2="486.3" stroke="#1c1ce8" stroke-width="1.32" stroke-linecap="square"/>
<line x1="935.0" y1="465.8" x2="967.1" y2="486.3" stroke="#1c1ce8" stroke-width="1.65" stroke-linecap="square"/><line x1="935.0" y1="465.8" x2="967.1" y2="486.3" stroke="#9a9ad8" stroke-width="0.6"/>
<line x1="939.6" y1="464.7" x2="971.7" y2="485.2" stroke="#1c1ce8" stroke-width="1.65" stroke-linecap="square"/><line x1="939.6" y1="464.7" x2="971.7" y2="485.2" stroke="#9a9ad8" stroke-width="0.6"/>
<line x1="971.7" y1="485.2" x2="976.2" y2="484.1" stroke="#1c1ce8" stroke-width="1.32" stroke-linecap="square"/>
<line x1="944.1" y1="463.6" x2="976.2" y2="484.1" stroke="#1c1ce8" stroke-width="1.65" stroke-linecap="square"/><line x1="944.1" y1="463.6" x2="976.2" y2="484.1" stroke="#9a9ad8" stroke-width="0.6"/>
<line x1="948.7" y1="462.5" x2="980.8" y2="483.0" stroke="#1c1ce8" stroke-width="1.65" stroke-linecap="square"/><line x1="948.7" y1="462.5" x2="980.8" y2="483.0" stroke="#9a9ad8" stroke-width="0.6"/>
<line x1="980.8" y1="483.0" x2="985.3" y2="481.9" stroke="#1c1ce8" stroke-width="1.32" stroke-linecap="square"/>
<line x1="953.2" y1="461.4" x2="985.3" y2="481.9" stroke="#1c1ce8" stroke-width="1.65" stroke-linecap="square"/><line x1="953.2" y1="461.4" x2="985.3" y2="481.9" stroke="#9a9ad8" stroke-width="0.6"/>
<line x1="957.8" y1="460.3" x2="989.9" y2="480.8" stroke="#1c1ce8" stroke-width="1.65" stroke-linecap="square"/><line x1="957.8" y1="460.3" x2="989.9" y2="480.8" stroke="#9a9ad8" stroke-width="0.6"/>
<line x1="989.9" y1="480.8" x2="994.4" y2="479.7" stroke="#1c1ce8" stroke-width="1.32" stroke-linecap="square"/>
<line x1="962.3" y1="459.2" x2="994.4" y2="479.7" stroke="#1c1ce8" stroke-width="1.65" stroke-linecap="square"/><line x1="962.3" y1="459.2" x2="994.4" y2="479.7" stroke="#9a9ad8" stroke-width="0.6"/>
<line x1="966.9" y1="458.1" x2="999.0" y2="478.6" stroke="#1c1ce8" stroke-width="1.65" stroke-linecap="square"/><line x1="966.9" y1="458.1" x2="999.0" y2="478.6" stroke="#9a9ad8" stroke-width="0.6"/>
<line x1="999.0" y1="478.6" x2="1003.5" y2="477.4" stroke="#1c1ce8" stroke-width="1.32" stroke-linecap="square"/>
<line x1="978.1" y1="461.2" x2="1003.5" y2="477.4" stroke="#1c1ce8" stroke-width="1.65" stroke-linecap="square"/><line x1="978.1" y1="461.2" x2="1003.5" y2="477.4" stroke="#9a9ad8" stroke-width="0.6"/>
<line x1="982.7" y1="460.1" x2="1008.1" y2="476.3" stroke="#1c1ce8" stroke-width="1.65" stroke-linecap="square"/><line x1="982.7" y1="460.1" x2="1008.1" y2="476.3" stroke="#9a9ad8" stroke-width="0.6"/>
<line x1="1008.1" y1="476.3" x2="1012.6" y2="475.2" stroke="#1c1ce8" stroke-width="1.32" stroke-linecap="square"/>
<line x1="987.2" y1="459.0" x2="1012.6" y2="475.2" stroke="#1c1ce8" stroke-width="1.65" stroke-linecap="square"/><line x1="987.2" y1="459.0" x2="1012.6" y2="475.2" stroke="#9a9ad8" stroke-width="0.6"/>
<line x1="991.7" y1="457.9" x2="1017.2" y2="474.1" stroke="#1c1ce8" stroke-width="1.65" stroke-linecap="square"/><line x1="991.7" y1="457.9" x2="1017.2" y2="474.1" stroke="#9a9ad8" stroke-width="0.6"/>
<line x1="1017.2" y1="474.1" x2="1021.7" y2="473.0" stroke="#1c1ce8" stroke-width="1.32" stroke-linecap="square"/>
<line x1="996.3" y1="456.8" x2="1021.7" y2="473.0" stroke="#1c1ce8" stroke-width="1.65" stroke-linecap="square"/><line x1="996.3" y1="456.8" x2="1021.7" y2="473.0" stroke="#9a9ad8" stroke-width="0.6"/>
<line x1="994.2" y1="451.5" x2="1026.2" y2="471.9" stroke="#1c1ce8" stroke-width="1.65" stroke-linecap="square"/><line x1="994.2" y1="451.5" x2="1026.2" y2="471.9" stroke="#9a9ad8" stroke-width="0.6"/>
<line x1="1026.2" y1="471.9" x2="1030.8" y2="470.8" stroke="#1c1ce8" stroke-width="1.32" stroke-linecap="square"/>
<line x1="998.7" y1="450.3" x2="1030.8" y2="470.8" stroke="#1c1ce8" stroke-width="1.65" stroke-linecap="square"/><line x1="998.7" y1="450.3" x2="1030.8" y2="470.8" stroke="#9a9ad8" stroke-width="0.6"/>
<line x1="930.8" y1="470.4" x2="957.5" y2="487.4" stroke="#1c1ce8" stroke-width="1.76" stroke-linecap="square"/><line x1="930.8" y1="470.4" x2="957.5" y2="487.4" stroke="#9a9ad8" stroke-width="0.6"/>
<line x1="968.7" y1="461.2" x2="995.5" y2="478.2" stroke="#1c1ce8" stroke-width="1.76" stroke-linecap="square"/><line x1="968.7" y1="461.2" x2="995.5" y2="478.2" stroke="#9a9ad8" stroke-width="0.6"/>
<line x1="930.8" y1="470.4" x2="968.7" y2="461.2" stroke="#1c1ce8" stroke-width="1.76" stroke-linecap="square"/><line x1="930.8" y1="470.4" x2="968.7" y2="461.2" stroke="#9a9ad8" stroke-width="0.6"/>
<line x1="957.5" y1="487.4" x2="995.5" y2="478.2" stroke="#1c1ce8" stroke-width="1.76" stroke-linecap="square"/><line x1="957.5" y1="487.4" x2="995.5" y2="478.2" stroke="#9a9ad8" stroke-width="0.6"/>
<line x1="904.6" y1="415.5" x2="958.1" y2="449.6" stroke="#1c1ce8" stroke-width="1.98" stroke-linecap="square"/><line x1="904.6" y1="415.5" x2="958.1" y2="449.6" stroke="#9a9ad8" stroke-width="0.6"/>
<line x1="942.5" y1="406.3" x2="996.0" y2="440.4" stroke="#1c1ce8" stroke-width="1.98" stroke-linecap="square"/><line x1="942.5" y1="406.3" x2="996.0" y2="440.4" stroke="#9a9ad8" stroke-width="0.6"/>
<rect x="944.9" y="407.7" width="6" height="4" fill="#1a1ae0"/>
<rect x="965.8" y="454.4" width="6" height="4" fill="#1a1ae0"/>
<rect x="965.4" y="478.1" width="6" height="4" fill="#1a1ae0"/>
</g>
<rect x="0" y="719" width="636" height="1.6" fill="#23505e"/>
<rect x="634.4" y="367" width="1.6" height="353" fill="#23505e"/>
<!-- status bar -->
<rect x="0" y="721" width="1280" height="16" fill="#e6e6e6"/>
<rect x="0" y="721" width="1280" height="3" fill="#d4d6d6"/>
<text x="-3" y="740" font-size="12" textLength="321" lengthAdjust="spacingAndGlyphs" fill="#1a1a1a">Click to select, TAB for alternates, CTRL adds, SHIFT unselects.</text>
<rect x="360" y="722" width="21" height="15" fill="#ececec"/>
<g fill="none" stroke="#8a8a8a" stroke-width="1.2"><circle cx="371" cy="732" r="2.5"/><path d="M366,737 L369,735 M374,735 L377,737"/></g>
<rect x="385.5" y="725.5" width="204" height="12" fill="#ffffff" stroke="#d0d0d0" stroke-width="1"/>
<path d="M580,736 L583,739 L586,736" fill="none" stroke="#777" stroke-width="1"/>
<path d="M599,728 h10 v6 h-6 l-3,3 v-3 h-1 z" fill="#f4f4f4" stroke="#9a9a9a" stroke-width="1"/>
<text x="612" y="741" font-size="12" fill="#333">:0</text>
<rect x="646.5" y="726.5" width="12" height="10" fill="#fff" stroke="#444" stroke-width="1"/><rect x="646.5" y="726.5" width="12" height="3" fill="#8ab0d8" stroke="#444" stroke-width="1"/>
<rect x="671" y="726" width="11" height="11" fill="#a8a8a8"/>
<rect x="691.5" y="725.5" width="154" height="12" fill="#ffffff" stroke="#d8d8d8" stroke-width="1"/>
<text x="694" y="740" font-size="12.5" fill="#9a9a9a">Main Model</text>
<path d="M834,736 L837,739 L840,736" fill="none" stroke="#777" stroke-width="1"/>
<g>
 <circle cx="1064" cy="735" r="3" fill="#e8b040"/><path d="M1066,728 l5,5 M1071,728 l-5,5" stroke="#e02020" stroke-width="1.6"/>
 <path d="M1085,735 l6,-5 h6 v7" fill="#a8c8f0" stroke="#4a7ab0" stroke-width="1"/>
 <rect x="1109" y="731" width="8" height="6" fill="#f0a050" stroke="#c05020" stroke-width="1"/><path d="M1113,728 l5,5 M1118,728 l-5,5" stroke="#e02020" stroke-width="1.6"/>
 <rect x="1133" y="731" width="6" height="6" fill="#8ab8e8" stroke="#2a6ab0" stroke-width="1"/><path d="M1138,728 l5,5 M1143,728 l-5,5" stroke="#e02020" stroke-width="1.6"/>
 <path d="M1157,732 h8 M1161,728 v8 M1164,734 l4,4" stroke="#333" stroke-width="1.3"/>
 <circle cx="1185" cy="736" r="4.5" fill="none" stroke="#b8b8b8" stroke-width="2"/>
 <path d="M1198,730 h13 l-5,6 v3 h-3 v-3 z" fill="#c8d0d8" stroke="#5a6a7a" stroke-width="1"/>
 <text x="1210" y="741" font-size="12" fill="#333">:0</text>
</g>

<rect x="522.5" y="21.5" width="33" height="18" rx="1.5" fill="url(#btn)" stroke="#a9bccf" stroke-width="1"/>
<rect x="532.5" y="29.0" width="13" height="4" rx="1" fill="#fff" stroke="#5a6a7a" stroke-width="0.9"/>
<rect x="558.5" y="21.5" width="33" height="18" rx="1.5" fill="url(#btn)" stroke="#a9bccf" stroke-width="1"/>
<rect x="569.0" y="25.0" width="12" height="11" fill="none" stroke="#5a6068" stroke-width="1"/>
<rect x="570.0" y="26.0" width="10" height="9" fill="none" stroke="#fff" stroke-width="1.5"/>
<rect x="571.5" y="27.5" width="7" height="6" fill="#b4bcc6" stroke="#4a5058" stroke-width="0.9"/>
<rect x="593.5" y="21.5" width="33" height="18" rx="1.5" fill="url(#btn)" stroke="#a9bccf" stroke-width="1"/>
<path d="M605.6,26.9 L614.4,34.1 M614.4,26.9 L605.6,34.1" stroke="#5a6068" stroke-width="5.4" stroke-linecap="round"/>
<path d="M605.6,26.9 L614.4,34.1 M614.4,26.9 L605.6,34.1" stroke="#fff" stroke-width="3.5" stroke-linecap="round"/>
<rect x="522.5" y="375.5" width="33" height="18" rx="1.5" fill="url(#btna)" stroke="#8ea6bf" stroke-width="1"/>
<rect x="532.5" y="383.0" width="13" height="4" rx="1" fill="#fff" stroke="#5a6a7a" stroke-width="0.9"/>
<rect x="558.5" y="375.5" width="33" height="18" rx="1.5" fill="url(#btna)" stroke="#8ea6bf" stroke-width="1"/>
<rect x="569.0" y="379.0" width="12" height="11" fill="none" stroke="#5a6068" stroke-width="1"/>
<rect x="570.0" y="380.0" width="10" height="9" fill="none" stroke="#fff" stroke-width="1.5"/>
<rect x="571.5" y="381.5" width="7" height="6" fill="#b4bcc6" stroke="#4a5058" stroke-width="0.9"/>
<rect x="593.5" y="375.5" width="33" height="18" rx="1.5" fill="url(#closeg)" stroke="#7a3a30" stroke-width="1"/>
<path d="M605.6,380.9 L614.4,388.1 M614.4,380.9 L605.6,388.1" stroke="#5a6068" stroke-width="5.4" stroke-linecap="round"/>
<path d="M605.6,380.9 L614.4,388.1 M614.4,380.9 L605.6,388.1" stroke="#fff" stroke-width="3.5" stroke-linecap="round"/>
<rect x="1164.5" y="21.5" width="33" height="18" rx="1.5" fill="url(#btn)" stroke="#a9bccf" stroke-width="1"/>
<rect x="1174.5" y="29.0" width="13" height="4" rx="1" fill="#fff" stroke="#5a6a7a" stroke-width="0.9"/>
<rect x="1199.5" y="21.5" width="33" height="18" rx="1.5" fill="url(#btn)" stroke="#a9bccf" stroke-width="1"/>
<rect x="1210.0" y="25.0" width="12" height="11" fill="none" stroke="#5a6068" stroke-width="1"/>
<rect x="1211.0" y="26.0" width="10" height="9" fill="none" stroke="#fff" stroke-width="1.5"/>
<rect x="1212.5" y="27.5" width="7" height="6" fill="#b4bcc6" stroke="#4a5058" stroke-width="0.9"/>
<rect x="1235.5" y="21.5" width="33" height="18" rx="1.5" fill="url(#btn)" stroke="#a9bccf" stroke-width="1"/>
<path d="M1247.6,26.9 L1256.4,34.1 M1256.4,26.9 L1247.6,34.1" stroke="#5a6068" stroke-width="5.4" stroke-linecap="round"/>
<path d="M1247.6,26.9 L1256.4,34.1 M1256.4,26.9 L1247.6,34.1" stroke="#fff" stroke-width="3.5" stroke-linecap="round"/>
<g transform="translate(5,22)"><path d="M0.5,0.5 L10,0.5 L13.5,4 L13.5,15.5 L0.5,15.5 Z" fill="#d8e8f8" stroke="#2a5090" stroke-width="1"/><rect x="0" y="11.5" width="14" height="4.5" fill="#142456"/><path d="M4,10.5 L4,2.8 L8,2.8 C11.2,2.8 11.2,6.8 8,6.8 L5,6.8 M7.5,6.8 L11,10.5" fill="none" stroke="#173c8c" stroke-width="2.6"/><path d="M2.5,13.8 h9" stroke="#c8d0e0" stroke-width="0.8" stroke-dasharray="1.5,0.8"/></g>
<g transform="translate(5,376)"><path d="M0.5,0.5 L10,0.5 L13.5,4 L13.5,15.5 L0.5,15.5 Z" fill="#d8e8f8" stroke="#2a5090" stroke-width="1"/><rect x="0" y="11.5" width="14" height="4.5" fill="#142456"/><path d="M4,10.5 L4,2.8 L8,2.8 C11.2,2.8 11.2,6.8 8,6.8 L5,6.8 M7.5,6.8 L11,10.5" fill="none" stroke="#173c8c" stroke-width="2.6"/><path d="M2.5,13.8 h9" stroke="#c8d0e0" stroke-width="0.8" stroke-dasharray="1.5,0.8"/></g>
<g transform="translate(646,22)"><path d="M0.5,0.5 L10,0.5 L13.5,4 L13.5,15.5 L0.5,15.5 Z" fill="#d8e8f8" stroke="#2a5090" stroke-width="1"/><rect x="0" y="11.5" width="14" height="4.5" fill="#142456"/><path d="M4,10.5 L4,2.8 L8,2.8 C11.2,2.8 11.2,6.8 8,6.8 L5,6.8 M7.5,6.8 L11,10.5" fill="none" stroke="#173c8c" stroke-width="2.6"/><path d="M2.5,13.8 h9" stroke="#c8d0e0" stroke-width="0.8" stroke-dasharray="1.5,0.8"/></g>
<rect x="611" y="44" width="15" height="295" fill="#f0f0f0"/>
<path d="M614.5,55 L618.5,51 L622.5,55" fill="none" stroke="#444" stroke-width="1.6"/>
<path d="M614.5,328 L618.5,332 L622.5,328" fill="none" stroke="#444" stroke-width="1.6"/>
<rect x="611" y="184" width="15" height="17" fill="#cdcdcd"/>
<rect x="581.5" y="238.5" width="27" height="94" rx="4" fill="#f2f2f2" stroke="#b8b8b8" stroke-width="1"/>
<circle cx="603" cy="244" r="2" fill="none" stroke="#aaa" stroke-width="0.8"/>
<circle cx="603" cy="327" r="2" fill="none" stroke="#aaa" stroke-width="0.8"/>
<path d="M595.0,256.0 h3 a4,4 0 0 1 4,4 v3 a7,7 0 1 1 -7,-7 z" fill="none" stroke="#8a8a8a" stroke-width="1.2"/><circle cx="595.0" cy="263.0" r="3.8" fill="none" stroke="#8a8a8a" stroke-width="1"/>
<path d="M593.5,278 L596.5,278 L595,280 Z" fill="#777"/>
<line x1="585" y1="284" x2="605" y2="284" stroke="#c8c8c8" stroke-width="1"/>
<path d="M589,292 L595,298 M589,292 v3 M589,292 h3" fill="none" stroke="#777" stroke-width="0.9"/><circle cx="597" cy="299" r="2.5" fill="none" stroke="#777" stroke-width="1"/><line x1="599" y1="301" x2="601" y2="303" stroke="#777" stroke-width="1.2"/>
<path d="M593.5,312 L596.5,312 L595,314 Z" fill="#777"/>
<rect x="4" y="339" width="622" height="18" fill="#f0f0f0"/>
<text x="26" y="351.8" font-size="10.5" font-weight="bold" textLength="32.3" lengthAdjust="spacingAndGlyphs" fill="#2a2a2a">1 : 100</text>
<rect x="79.5" y="342" width="13" height="9" fill="#a8a8a8" stroke="#505050" stroke-width="1"/>
<path d="M80.5,344.5 H92.5 M80.5,347 H92.5 M80.5,349.5 H92.5 M82.5,342 V351 M85.5,342 V351 M88.5,342 V351" stroke="#e8e8e8" stroke-width="0.8"/>
<path d="M100.0,345 L102.5,342 L112.5,342 L112.5,349 L110.0,352 L100.0,352 Z M100.0,345 L110.0,345 L112.5,342 M110.0,345 L110.0,352" fill="#8cc4ec" stroke="#2a6ab0" stroke-width="1.1"/>
<circle cx="122.5" cy="346" r="3.6" fill="#f8d040" stroke="#e09010" stroke-width="1"/>
<path d="M122.5,340 V352 M116.5,346 H128.5 M118.5,342 L126.5,350 M126.5,342 L118.5,350" stroke="#e8a020" stroke-width="0.8"/>
<path d="M125.5,347 L130.5,352 M130.5,347 L125.5,352" stroke="#e02020" stroke-width="1.8"/>
<circle cx="144.0" cy="345" r="3.5" fill="none" stroke="#3a6aa0" stroke-width="1.1"/><path d="M139.5,351.5 H147.5" stroke="#3a3a3a" stroke-width="1.4"/>
<path d="M146.5,347 L151.5,352 M151.5,347 L146.5,352" stroke="#e02020" stroke-width="1.8"/>
<path d="M158.5,344 L162.5,342 L166.5,346 L163.5,349 Z" fill="none" stroke="#505050" stroke-width="1"/><circle cx="168.5" cy="348" r="3" fill="#d8ecf8" stroke="#3a7ac0" stroke-width="1"/>
<path d="M179.5,343 V350 H189.5 M177.5,346 H186.5 V352" fill="none" stroke="#2a6ab0" stroke-width="1.5"/>
<path d="M183.5,342 L190.5,351 M190.5,342 L183.5,351" stroke="#e02020" stroke-width="1.8"/>
<path d="M200.5,343 V350 H210.5 M198.5,346 H207.5 V352" fill="none" stroke="#2a6ab0" stroke-width="1.5"/><circle cx="208.5" cy="346" r="3" fill="#b8d8f0" stroke="#2a6ab0" stroke-width="1"/>
<path d="M218.5,352 V346 L224.0,341 L229.5,346 V352 Z" fill="#fff" stroke="#505050" stroke-width="1.1"/><rect x="223.5" y="347" width="6" height="5" fill="#d0e0e8" stroke="#404040" stroke-width="0.9"/>
<path d="M238.5,345 L242.5,350 L246.5,346 M246.5,346 Q249.5,342 251.5,346 Q249.5,350 246.5,346" fill="none" stroke="#505050" stroke-width="1.1"/>
<circle cx="265.5" cy="345" r="2.3" fill="none" stroke="#4a90d0" stroke-width="1.2"/><path d="M265.5,347 V351" stroke="#4a90d0" stroke-width="1.1"/>
<rect x="279.5" y="343" width="11" height="8" fill="none" stroke="#404040" stroke-width="1.2"/><circle cx="287.5" cy="348" r="2.5" fill="#7ab0d8" stroke="#303030" stroke-width="0.8"/>
<path d="M298.5,352 V346 L304.5,342 L310.5,346 V352" fill="#e8a8a0" stroke="#b03030" stroke-width="1.1"/><circle cx="307.5" cy="348" r="3" fill="#b8d8f0" stroke="#2a6ab0" stroke-width="1"/>
<path d="M320.0,345.5 L322.5,342.5 L330.5,342.5 L330.5,350 L328.0,352.5 L320.0,352.5 Z M320.0,345.5 L328.0,345.5 L330.5,342.5 M328.0,345.5 L328.0,352.5" fill="#d0d0d0" stroke="#404040" stroke-width="1.1"/>
<path d="M339.5,352 V342 H351.5 V345 M339.5,345 H344.5" fill="none" stroke="#404040" stroke-width="1.2"/><circle cx="348.5" cy="349" r="2.8" fill="#606060"/>
<path d="M366.5,343 L363.0,347 L366.5,351" fill="none" stroke="#404040" stroke-width="1.5"/>
<rect x="475" y="340" width="17" height="15" fill="#cdcdcd"/>
<path d="M599,344 L603,348 L599,352" fill="none" stroke="#444" stroke-width="1.6"/>
<rect x="623" y="345" width="1.6" height="1.6" fill="#a8a8a8"/><rect x="620" y="348" width="1.6" height="1.6" fill="#a8a8a8"/><rect x="623" y="348" width="1.6" height="1.6" fill="#a8a8a8"/><rect x="617" y="351" width="1.6" height="1.6" fill="#a8a8a8"/><rect x="620" y="351" width="1.6" height="1.6" fill="#a8a8a8"/><rect x="623" y="351" width="1.6" height="1.6" fill="#a8a8a8"/>
<rect x="611" y="398" width="16" height="297" fill="#f0f0f0"/>
<path d="M614.5,408 L618.5,404 L622.5,408" fill="none" stroke="#444" stroke-width="1.6"/>
<path d="M614.5,684 L618.5,688 L622.5,684" fill="none" stroke="#444" stroke-width="1.6"/>
<rect x="611" y="538" width="16" height="17" fill="#cdcdcd"/>
<rect x="4" y="695" width="623" height="18" fill="#f0f0f0"/>
<text x="29" y="707.8" font-size="10.5" font-weight="bold" textLength="27" lengthAdjust="spacingAndGlyphs" fill="#2a2a2a">1 : 10</text>
<rect x="80" y="698" width="12.5" height="9" fill="#b0b0b0" stroke="#505050" stroke-width="1"/>
<path d="M81,700.5 H92 M81,703 H92 M81,705.5 H92 M83,698 V707 M86,698 V707 M89,698 V707" stroke="#e8e8e8" stroke-width="0.8" stroke-dasharray="1,1"/>
<path d="M99.5,702 L102,698.5 L111,698.5 L111,705 L108.5,708 L99.5,708 Z M99.5,702 L108.5,702 L111,698.5 M108.5,702 L108.5,708" fill="#f4f4f4" stroke="#505050" stroke-width="1.1"/>
<circle cx="123.5" cy="702" r="3.4" fill="#f8d040" stroke="#e09010" stroke-width="1"/>
<path d="M123.5,696.5 V707.5 M118,702 H129 M119.5,698 L127.5,706 M127.5,698 L119.5,706" stroke="#e8a020" stroke-width="0.8"/>
<path d="M125.5,703 L130,707.5 M130,703 L125.5,707.5" stroke="#e02020" stroke-width="1.8"/>
<circle cx="143.5" cy="701" r="3.5" fill="none" stroke="#3a6aa0" stroke-width="1.1"/><path d="M139,707.5 H147" stroke="#3a3a3a" stroke-width="1.4"/>
<path d="M146,703 L151,708 M151,703 L146,708" stroke="#e02020" stroke-width="1.8"/>
<path d="M161,699 V707 H171 M158,702 H168 V708" fill="none" stroke="#2a6ab0" stroke-width="1.5"/><path d="M166,698 h5 v3" fill="none" stroke="#2a6ab0" stroke-width="1.2"/>
<path d="M180,700 V707 H187 M178,703 H185 V708" fill="none" stroke="#2a6ab0" stroke-width="1.5"/><circle cx="189" cy="702" r="3" fill="#d8ecf8" stroke="#2a6ab0" stroke-width="1"/>
<path d="M198.5,701 L202.5,706 L206.5,702 M206.5,702 Q209.5,698 212.5,702 Q209.5,706 206.5,702" fill="none" stroke="#505050" stroke-width="1.1"/>
<circle cx="224.3" cy="701.5" r="2" fill="none" stroke="#4a90d0" stroke-width="1.2"/><path d="M224.3,703.5 V707" stroke="#4a90d0" stroke-width="1.1"/>
<rect x="239" y="699" width="11" height="8" fill="none" stroke="#404040" stroke-width="1.2"/><circle cx="247" cy="704" r="2.5" fill="#7ab0d8" stroke="#303030" stroke-width="0.8"/>
<path d="M258,708 V702 L264,698 L270,702 V708" fill="#e8a8a0" stroke="#b03030" stroke-width="1.1"/><circle cx="267" cy="704" r="3" fill="#b8d8f0" stroke="#2a6ab0" stroke-width="1"/>
<path d="M279.5,708 V698 H291.5 V701 M279.5,701 H284.5" fill="none" stroke="#404040" stroke-width="1.2"/><circle cx="288.5" cy="705" r="2.8" fill="#606060"/>
<path d="M305.5,699 L302,703 L305.5,707" fill="none" stroke="#404040" stroke-width="1.5"/>
<rect x="445" y="696" width="17" height="15" fill="#cdcdcd"/>
<path d="M599,699 L603,703 L599,707" fill="none" stroke="#444" stroke-width="1.6"/>
<rect x="623" y="701" width="1.6" height="1.6" fill="#a8a8a8"/><rect x="620" y="704" width="1.6" height="1.6" fill="#a8a8a8"/><rect x="623" y="704" width="1.6" height="1.6" fill="#a8a8a8"/><rect x="617" y="707" width="1.6" height="1.6" fill="#a8a8a8"/><rect x="620" y="707" width="1.6" height="1.6" fill="#a8a8a8"/><rect x="623" y="707" width="1.6" height="1.6" fill="#a8a8a8"/>
<rect x="1253" y="44" width="16" height="652" fill="#f0f0f0"/>
<path d="M1256,55 L1260,51 L1264,55" fill="none" stroke="#444" stroke-width="1.6"/>
<path d="M1256,684 L1260,688 L1264,684" fill="none" stroke="#444" stroke-width="1.6"/>
<rect x="1253" y="362" width="16" height="17" fill="#cdcdcd"/>
<rect x="1223.5" y="239.5" width="27" height="94" rx="4" fill="#f2f2f2" stroke="#b8b8b8" stroke-width="1"/>
<circle cx="1245" cy="245" r="2" fill="none" stroke="#aaa" stroke-width="0.8"/>
<circle cx="1245" cy="328" r="2" fill="none" stroke="#aaa" stroke-width="0.8"/>
<path d="M1237.0,257.0 h3 a4,4 0 0 1 4,4 v3 a7,7 0 1 1 -7,-7 z" fill="none" stroke="#8a8a8a" stroke-width="1.2"/><circle cx="1237.0" cy="264.0" r="3.8" fill="none" stroke="#8a8a8a" stroke-width="1"/>
<path d="M1235.5,279 L1238.5,279 L1237,281 Z" fill="#777"/>
<line x1="1227" y1="285" x2="1247" y2="285" stroke="#c8c8c8" stroke-width="1"/>
<path d="M1231,293 L1237,299 M1231,293 v3 M1231,293 h3" fill="none" stroke="#777" stroke-width="0.9"/><circle cx="1239" cy="300" r="2.5" fill="none" stroke="#777" stroke-width="1"/><line x1="1241" y1="302" x2="1243" y2="304" stroke="#777" stroke-width="1.2"/>
<path d="M1235.5,313 L1238.5,313 L1237,315 Z" fill="#777"/>
<rect x="645" y="696" width="624" height="17" fill="#f0f0f0"/>
<text x="673" y="707.8" font-size="10.5" font-weight="bold" textLength="20" lengthAdjust="spacingAndGlyphs" fill="#2a2a2a">1 : 5</text>
<rect x="720.5" y="698" width="13" height="9" fill="#a8a8a8" stroke="#505050" stroke-width="1"/>
<path d="M721.5,700.5 H733.5 M721.5,703 H733.5 M721.5,705.5 H733.5 M723.5,698 V707 M726.5,698 V707 M729.5,698 V707" stroke="#e8e8e8" stroke-width="0.8"/>
<path d="M741.0,701 L743.5,698 L753.5,698 L753.5,705 L751.0,708 L741.0,708 Z M741.0,701 L751.0,701 L753.5,698 M751.0,701 L751.0,708" fill="#8cc4ec" stroke="#2a6ab0" stroke-width="1.1"/>
<circle cx="763.5" cy="702" r="3.6" fill="#f8d040" stroke="#e09010" stroke-width="1"/>
<path d="M763.5,696 V708 M757.5,702 H769.5 M759.5,698 L767.5,706 M767.5,698 L759.5,706" stroke="#e8a020" stroke-width="0.8"/>
<path d="M766.5,703 L771.5,708 M771.5,703 L766.5,708" stroke="#e02020" stroke-width="1.8"/>
<circle cx="785.0" cy="701" r="3.5" fill="none" stroke="#3a6aa0" stroke-width="1.1"/><path d="M780.5,707.5 H788.5" stroke="#3a3a3a" stroke-width="1.4"/>
<path d="M787.5,703 L792.5,708 M792.5,703 L787.5,708" stroke="#e02020" stroke-width="1.8"/>
<path d="M799.5,700 L803.5,698 L807.5,702 L804.5,705 Z" fill="none" stroke="#505050" stroke-width="1"/><circle cx="809.5" cy="704" r="3" fill="#d8ecf8" stroke="#3a7ac0" stroke-width="1"/>
<path d="M820.5,699 V706 H830.5 M818.5,702 H827.5 V708" fill="none" stroke="#2a6ab0" stroke-width="1.5"/>
<path d="M824.5,698 L831.5,707 M831.5,698 L824.5,707" stroke="#e02020" stroke-width="1.8"/>
<path d="M841.5,699 V706 H851.5 M839.5,702 H848.5 V708" fill="none" stroke="#2a6ab0" stroke-width="1.5"/><circle cx="849.5" cy="702" r="3" fill="#b8d8f0" stroke="#2a6ab0" stroke-width="1"/>
<path d="M859.5,708 V702 L865.0,697 L870.5,702 V708 Z" fill="#fff" stroke="#505050" stroke-width="1.1"/><rect x="864.5" y="703" width="6" height="5" fill="#d0e0e8" stroke="#404040" stroke-width="0.9"/>
<path d="M879.5,701 L883.5,706 L887.5,702 M887.5,702 Q890.5,698 892.5,702 Q890.5,706 887.5,702" fill="none" stroke="#505050" stroke-width="1.1"/>
<circle cx="906.5" cy="701" r="2.3" fill="none" stroke="#4a90d0" stroke-width="1.2"/><path d="M906.5,703 V707" stroke="#4a90d0" stroke-width="1.1"/>
<rect x="920.5" y="699" width="11" height="8" fill="none" stroke="#404040" stroke-width="1.2"/><circle cx="928.5" cy="704" r="2.5" fill="#7ab0d8" stroke="#303030" stroke-width="0.8"/>
<path d="M939.5,708 V702 L945.5,698 L951.5,702 V708" fill="#e8a8a0" stroke="#b03030" stroke-width="1.1"/><circle cx="948.5" cy="704" r="3" fill="#b8d8f0" stroke="#2a6ab0" stroke-width="1"/>
<path d="M961.0,701.5 L963.5,698.5 L971.5,698.5 L971.5,706 L969.0,708.5 L961.0,708.5 Z M961.0,701.5 L969.0,701.5 L971.5,698.5 M969.0,701.5 L969.0,708.5" fill="#d0d0d0" stroke="#404040" stroke-width="1.1"/>
<path d="M980.5,708 V698 H992.5 V701 M980.5,701 H985.5" fill="none" stroke="#404040" stroke-width="1.2"/><circle cx="989.5" cy="705" r="2.8" fill="#606060"/>
<path d="M1007.5,699 L1004.0,703 L1007.5,707" fill="none" stroke="#404040" stroke-width="1.5"/>
<rect x="1116" y="696" width="17" height="15" fill="#cdcdcd"/>
<path d="M1240,699 L1244,703 L1240,707" fill="none" stroke="#444" stroke-width="1.6"/>
<rect x="1265" y="701" width="1.6" height="1.6" fill="#a8a8a8"/><rect x="1262" y="704" width="1.6" height="1.6" fill="#a8a8a8"/><rect x="1265" y="704" width="1.6" height="1.6" fill="#a8a8a8"/><rect x="1259" y="707" width="1.6" height="1.6" fill="#a8a8a8"/><rect x="1262" y="707" width="1.6" height="1.6" fill="#a8a8a8"/><rect x="1265" y="707" width="1.6" height="1.6" fill="#a8a8a8"/>
<!-- titles -->
<text x="57.5" y="36.6" font-size="15" textLength="428.5" lengthAdjust="spacingAndGlyphs" fill="#262c34">3D View: {3D - aryanisys} - teamMEP-15-07-95-2016-save 38.rvt</text>
<text x="62" y="390.6" font-size="15" textLength="419.6" lengthAdjust="spacingAndGlyphs" fill="#1c2636">Floor Plan: PP4 Conduit - teamMEP-15-07-95-2016-save 38.rvt</text>
<text x="737.6" y="36.6" font-size="15" textLength="351.4" lengthAdjust="spacingAndGlyphs" fill="#262c34">3D View: {3D} - teamMEP-15-07-95-2016-save 38.rvt</text>

</svg>
</body></html>
